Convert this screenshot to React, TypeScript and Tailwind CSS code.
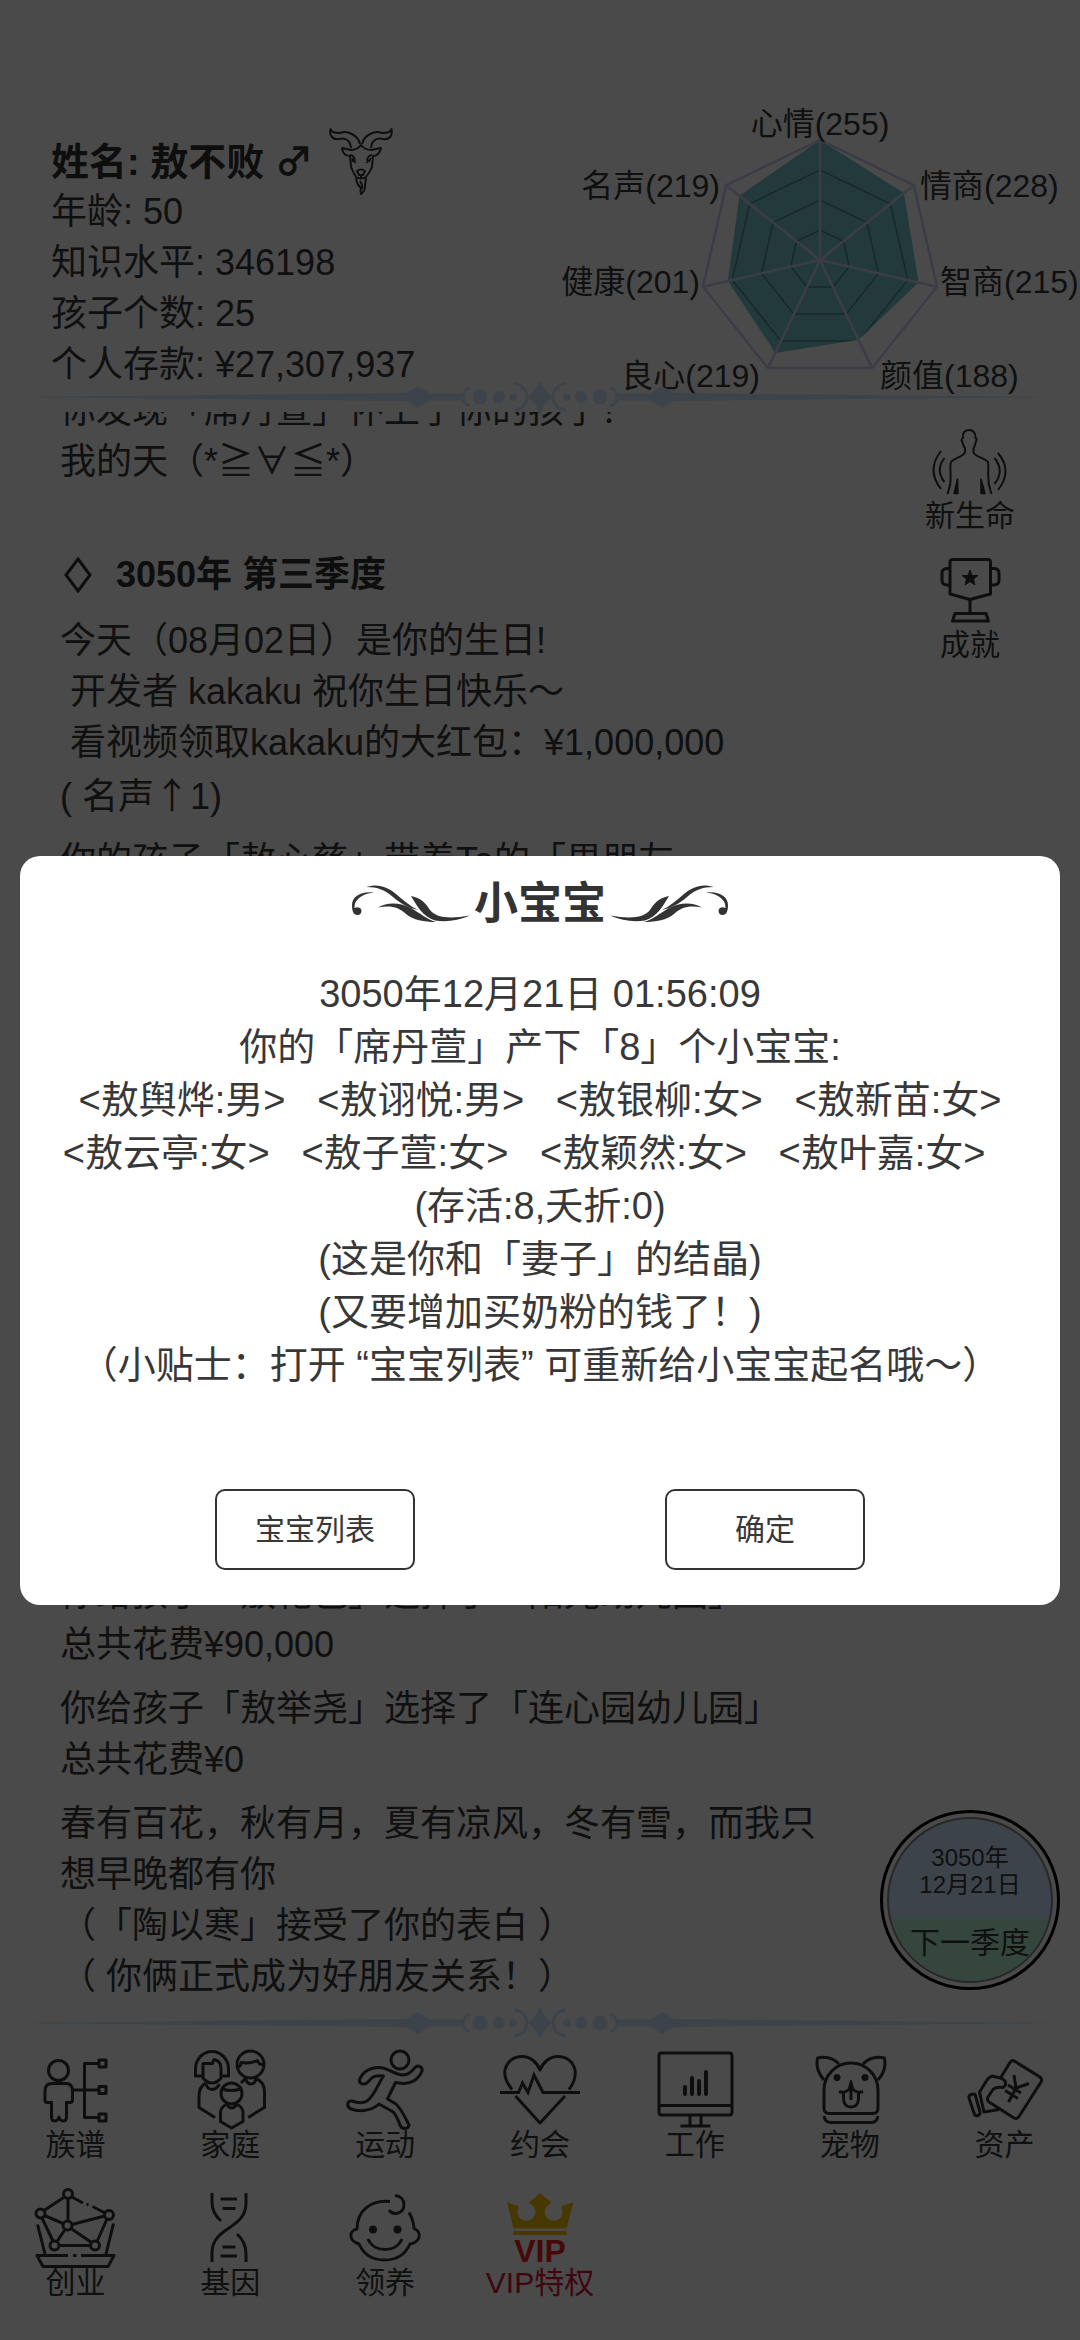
import type { ReactNode } from "react";
import clsx from "clsx";

const stats = [
  { label: "年龄", value: "50" },
  { label: "知识水平", value: "346198" },
  { label: "孩子个数", value: "25" },
  { label: "个人存款", value: "¥27,307,937" },
];

type Anchor = "start" | "middle" | "end";

const abilities: { name: string; value: number; x: number; y: number; anchor: Anchor }[] = [
  { name: "心情", value: 255, x: 280, y: 55, anchor: "middle" },
  { name: "情商", value: 228, x: 380, y: 117, anchor: "start" },
  { name: "智商", value: 215, x: 400, y: 213, anchor: "start" },
  { name: "颜值", value: 188, x: 340, y: 307, anchor: "start" },
  { name: "良心", value: 219, x: 220, y: 307, anchor: "end" },
  { name: "健康", value: 201, x: 160, y: 213, anchor: "end" },
  { name: "名声", value: 219, x: 180, y: 117, anchor: "end" },
];

const CHART = { cx: 280, cy: 180, r: 120, max: 255 };

function chartPoint(index: number, ratio: number) {
  const angle = (index * 2 * Math.PI) / abilities.length;
  const x = CHART.cx + Math.sin(angle) * CHART.r * ratio;
  const y = CHART.cy - Math.cos(angle) * CHART.r * ratio;
  return `${x.toFixed(1)},${y.toFixed(1)}`;
}

const ring = (ratio: number) => abilities.map((_, i) => chartPoint(i, ratio)).join(" ");

function AbilityChart() {
  const area = abilities.map((a, i) => chartPoint(i, a.value / CHART.max)).join(" ");
  return (
    <svg viewBox="0 0 540 310" className="w-full overflow-visible" role="img" aria-label="能力">
      <clipPath id="ability-area">
        <polygon points={area} />
      </clipPath>
      <polygon points={area} fill="#75c8cf" />
      <g clipPath="url(#ability-area)" fill="none" stroke="#4f8a92" strokeWidth="1.5">
        {[0.25, 0.5, 0.75].map((ratio) => (
          <polygon key={ratio} points={ring(ratio)} />
        ))}
      </g>
      <g fill="none" stroke="#cfcff5" strokeWidth="2.5">
        <polygon points={ring(1)} />
        {abilities.map((a, i) => {
          const [x, y] = chartPoint(i, 1).split(",");
          return <line key={a.name} x1={CHART.cx} y1={CHART.cy} x2={x} y2={y} />;
        })}
      </g>
      {abilities.map((a) => (
        <text key={a.name} x={a.x} y={a.y} textAnchor={a.anchor} className="fill-[#383838] text-[32px]">
          {`${a.name}(${a.value})`}
        </text>
      ))}
    </svg>
  );
}

function DividerHalf() {
  return (
    <>
      <path d="M10 15 L406 11 L418 4 L430 11.500 H462 V18.500 H430 L418 26 L406 19Z" />
      <path d="M470 6 A10 9.500 0 0 0 470 24" fill="none" stroke="#d0e8ff" strokeWidth="3" />
      <circle cx="480" cy="15" r="7.500" />
      <circle cx="499" cy="15" r="6" />
      <circle cx="513" cy="15" r="4" />
      <path d="M514 2 A13 13 0 0 1 514 28" fill="none" stroke="#d0e8ff" strokeWidth="3" />
    </>
  );
}

function Divider({ className }: { className?: string }) {
  return (
    <svg viewBox="0 0 1080 30" className={clsx("w-full shrink-0", className)} fill="#d0e8ff" aria-hidden="true">
      <DividerHalf />
      <g transform="matrix(-1 0 0 1 1080 0)">
        <DividerHalf />
      </g>
      <path d="M540 -2 Q544 9 552 15 Q544 21 540 32 Q536 21 528 15 Q536 9 540 -2Z" />
    </svg>
  );
}

function Icon({ children, viewBox = "0 0 80 80", className }: { children: ReactNode; viewBox?: string; className?: string }) {
  return (
    <svg
      viewBox={viewBox}
      className={clsx("overflow-visible", className ?? "size-20")}
      fill="none"
      stroke="#333"
      strokeWidth="3"
      strokeLinejoin="round"
      aria-hidden="true"
    >
      {children}
    </svg>
  );
}

function GoatIcon() {
  return (
    <Icon viewBox="0 0 64 66" className="h-[66px] w-16">
      <g strokeWidth="2">
        <path d="M31 16 C29 7 18 2 11 5 C6 5 2 4 1.500 1 C0 8 4 12 10 11 C16 9 21 12 22 20" />
        <path d="M33 16 C35 7 46 2 53 5 C58 5 62 4 62.500 1 C64 8 60 12 54 11 C48 9 43 12 42 20" />
        <path d="M32 17 Q28 22 22 22 L13 20 Q14 28 21 28 L22 39 Q24 44 27 49 Q32 52 37 49 Q41 44 43 39 L44 28 Q50 28 52 20 L42 22 Q36 22 32 17Z" />
        <path d="M21 27 Q25 27 26 33 M43 27 Q39 27 38 33 M28 43 Q32 40 36 43 L34 47 H30Z M32 47 V50" />
        <path d="M27 50 Q28 57 32 60 Q31 63 32 66 Q37 62 36 57 L37 50 M31 53 Q34 57 33 61" />
      </g>
      <path d="M23 30 L27 35 L23 33Z M42 30 L37 35 L41 33Z" fill="#333" strokeWidth="1" />
    </Icon>
  );
}

function NewLifeIcon() {
  return (
    <Icon viewBox="0 0 80 66" className="h-[66px] w-20">
      <g strokeWidth="2">
        <path d="M17.500 65 C19 59 21 56 20.500 50 C21 44 19.500 38 21 33 C25 28 34 28 35 23 V19 C33 17 33 14 31.500 11 Q32 9 33 9 C32 4 35 1 39 1 C43 1 46 4 45.500 9 Q47 9 46.500 11 C45 14 45.500 17 43.500 19 V23 C44 28 54 28 58 33 C59 38 57.500 44 58.500 50 C58 56 60 59 61.500 65" />
        <path d="M11 22 Q-4 41 11 60 M14.500 29 Q5 41 14.500 53 M64.500 29 Q75 42 64.500 55 M68 24 Q83 42 68 61" />
      </g>
      <path d="M24 64.500 L27.500 50 L28 64.500Z M51 64.500 L51 50 L55 64.500Z" fill="#333" strokeWidth="1.500" />
    </Icon>
  );
}

function TrophyIcon() {
  return (
    <Icon viewBox="0 0 80 66" className="h-[66px] w-20">
      <path d="M23 1.500 H58 Q60.500 1.500 60.500 4 V36 L40 41.500 L20 36 V4 Q20 1.500 23 1.500Z" />
      <path d="M20 10.500 H17 Q12 11 12 15 V22 Q12 27 17 27 H20 M61 10.500 H64 Q69 11 69 15 V22 Q69 27 64 27 H61 M40 42 V55 M25 55.500 H56 L58.500 63 H22.500Z" />
      <path
        d="M40 12 L42 17.500 H48 L43.500 21 L45 27 L40 23.500 L35 27 L36.500 21 L32 17.500 H38Z"
        fill="#333"
        strokeWidth="1"
      />
    </Icon>
  );
}

function FamilyTreeIcon() {
  return (
    <Icon>
      <circle cx="23.500" cy="20.500" r="10" />
      <path d="M15 52.500 H12 Q10 52.500 10 50 V41 Q10 33.500 17 33.500 H31 Q37.500 33.500 37.500 41 V50 Q37.500 52.500 35 52.500 H32" />
      <path d="M16.500 51 V67 Q16.500 71 20 71 Q23 71 24 67 Q25 71 28 71 Q31.500 71 31.500 67 V51" />
      <path d="M38 40 H64 M64 13.500 H49.500 V67.500 H64 M64 10 h7 v7 h-7z M64 36.500 h7 v7 h-7z M64 64 h7 v7 h-7z" />
    </Icon>
  );
}

function FamilyIcon() {
  return (
    <Icon>
      <path d="M12.500 26 H5.500 V19 A16.500 17.500 0 0 1 38.500 19 V26 H32" />
      <path d="M13 28 V13.500 H22.500 L24 9.500 Q31 11 31 18 V28 Q27 33 22 33 Q17 33 13 28Z" />
      <path d="M15.500 33 Q9 37 9 46 V57.500 L25 67.500 M15.500 33 Q17 39 22 39.500 Q27 39 29.500 34" />
      <circle cx="60.500" cy="14.500" r="13.500" />
      <path d="M47 17 Q51 17 51 12.500 Q60 14 67.500 10.500 Q68.500 15 74 14.500" />
      <path d="M51 33 L55.500 28.500 Q57 34 61 34 Q65 34 66 28.500 Q74.500 32 74.500 42 V57.500 L58 67.500" />
      <circle cx="41.500" cy="43.500" r="10.500" />
      <path d="M32 39 Q41.500 42 51 39 M37 54 Q30.500 57 30.500 63 V71.500 L41.500 78 L53 71.500 V63 Q53 57 46.500 54 Q45 58 41.500 58 Q38 58 37 54Z" />
    </Icon>
  );
}

function SportIcon() {
  return (
    <Icon>
      <circle cx="55" cy="10" r="9" />
      <path d="M14.500 30 C17 22 25 17.500 34 17.500 C44 17.500 48 25 58.500 25 C64 25 67 21 70 17.500 C73 14.500 78 17 77 21 C74 29 66 34 58 33.500 L50.500 32.500 L42.500 49 L51 54 C57 60 60 67 64 75 C63 80 57 79 55.500 76 C53 71 52 65 47.500 61.500 L34 54 C27 61 14 62 6 59 C1 57 2 50 7 51 C13 53 18 53.500 22 51 C30 45 33 34 38.500 26 C30 25 27 27 23.500 31.500 C20 36 14 34 14.500 30Z" />
    </Icon>
  );
}

function DateIcon() {
  return (
    <Icon>
      <path d="M12 39.500 C6 32 4 26 5 20 C7 11 14 6.500 22 6.500 C30 6.500 37 12 40 20 C43 12 50 6.500 58 6.500 C66 6.500 73 11 75 20 C76 26 74 33 69 39.500" />
      <path d="M15.500 46 L40 73 L65 46" />
      <path d="M0 42.500 H18.500 L22.500 33 L28 42.500 L34 25 L43 42.500 H80" strokeLinejoin="miter" />
    </Icon>
  );
}

function WorkIcon() {
  return (
    <Icon>
      <path d="M6 3 H74.500 Q77 3 77 5.500 V62 Q77 65 74.500 65 H6 Q4 65 4 62 V5.500 Q4 3 6 3Z M4 55.500 H77 M35 66 V75 M46 66 V75 M25.500 76 H55.500" />
      <path d="M30 37 V44 M37 28 V44 M44 31 V44 M51 22 V44" strokeWidth="4" strokeLinecap="round" />
    </Icon>
  );
}

function PetIcon() {
  return (
    <Icon>
      <path d="M14 58 V40 A27 27 0 0 1 68 40 V58 Q68 63.500 63 63.500 H19 Q14 63.500 14 58Z" />
      <path d="M29 14 Q20 5 7.500 8 Q5 20 14 30 M53 14 Q62 5 74.500 8 Q77 20 68 30 M14 66 Q15 72.500 21 72.500 H61 Q67 72.500 68 66" />
      <path d="M29 41.500 Q36 44 41 37 Q46 44 53 41.500 M33.500 43 V49 Q34 57 41 57 Q48 57 48.500 49 V43 M41 41 V50" />
      <path d="M41 31 L43.500 40 H38.500Z" fill="#333" strokeWidth="2" />
      <circle cx="27" cy="27.500" r="3.500" fill="#333" stroke="none" />
      <circle cx="55" cy="27.500" r="3.500" fill="#333" stroke="none" />
    </Icon>
  );
}

function AssetIcon() {
  return (
    <Icon>
      <path d="M35.500 28 L45 12.500 Q47 9.500 50 11.500 L75 27 Q77.500 29 76 32 L54 66.500 Q52 69.500 49 68 L24 52 Q21.500 50 23 47 L28 39.500 Q31 36.500 38 37.500 Q42 35 40 31 Q38 28.500 35 28 L27 26 L23 28.500 L14.500 42 L19 62 L34 59.500" />
      <path d="M5 45 L8 44 Q10 43.500 10.500 46 L15 62 Q15.500 64.500 13 65.500 Q10 66.500 9 63 L4 48 Q3.500 46 5 45Z" />
      <path d="M49 25 L51 38 L64 33.500 M51 38 L43.500 52 M43 35 L56 43 M40 40.500 L53 48.500" />
    </Icon>
  );
}

function StartupIcon() {
  const nodes = [
    [33, 6],
    [5.5, 25.5],
    [74, 27],
    [32.5, 37.5],
    [19.5, 57.5],
    [60, 57.5],
  ];
  return (
    <Icon>
      {nodes.map(([cx, cy]) => (
        <circle key={`${cx}-${cy}`} cx={cx} cy={cy} r="4.500" />
      ))}
      <path d="M29.500 9 L9 22.500 M33 11 V33 M37 9 L48 15 M51.500 16.500 h2 M57.500 18.500 L70 25 M9.500 27.500 L28 35.500 M37 36.500 L69.500 28 M7 30 L18 53 M72 31 L62 53.500 M30 41.500 L22 53.500 M36 40.500 L56.500 54.500 M24 57.500 H55.500" />
      <path d="M2.500 36.500 L10 66 M78.500 35.500 L71 66 M33 67.500 H2 L8 78.500 H73 L79 67.500 H46 M38 67.500 h3.500" />
    </Icon>
  );
}

function GeneIcon() {
  return (
    <Icon>
      <path d="M22 5 V14 Q22 25 31 33 M56 5 V15 C56 42 22 38 22 65 V74 M47 46 Q56 54 56 66 V74 M30.500 11 H47 M32.500 20.500 H45.500 M32.500 59 H45.500 M30.500 68 H47" />
    </Icon>
  );
}

function AdoptIcon() {
  return (
    <Icon>
      <path d="M45 13.500 C26 12 12 22 12 41 C5 42 2 52 14 56 C19 67 28 72 39.500 72 C51 72 60 67 65 56 C76 54 77 44 69 40.500 Q68.500 32 64 24.500" />
      <path d="M50 7.500 C56 8 59 12 59 16.500 C59 26 48 28 44 22 M23 51 C29 65 51 65 57 51" />
      <ellipse cx="28" cy="41.500" rx="4" ry="4" fill="#333" stroke="none" />
      <ellipse cx="52.500" cy="41.500" rx="4" ry="4" fill="#333" stroke="none" />
    </Icon>
  );
}

function VipIcon() {
  return (
    <Icon>
      <g fill="#f5bc00" stroke="none">
        <path d="M7 14 L19 18.500 A9 9 0 1 0 34 19 L29 14.500 L40 5 L51.500 14.500 L46 19 A9 9 0 1 0 61 18.500 L73.500 14 L66.500 40.500 H13.500Z" />
        <path d="M13.500 43 H66.500 V47 H13.500Z" />
      </g>
      <text x="40" y="74" textAnchor="middle" stroke="none" className="fill-[#f01c1c] text-[32px] font-bold">
        VIP
      </text>
    </Icon>
  );
}

const menu = [
  { label: "族谱", icon: <FamilyTreeIcon /> },
  { label: "家庭", icon: <FamilyIcon /> },
  { label: "运动", icon: <SportIcon /> },
  { label: "约会", icon: <DateIcon /> },
  { label: "工作", icon: <WorkIcon /> },
  { label: "宠物", icon: <PetIcon /> },
  { label: "资产", icon: <AssetIcon /> },
  { label: "创业", icon: <StartupIcon /> },
  { label: "基因", icon: <GeneIcon /> },
  { label: "领养", icon: <AdoptIcon /> },
  { label: "VIP特权", icon: <VipIcon />, vip: true },
];

// full-width symbols (arrows, gender signs) come from the CJK face
function Symbol({ children }: { children: string }) {
  return <span className="font-['Noto_Sans_CJK_SC',sans-serif]">{children}</span>;
}

function LogEntry({ lines }: { lines: string[] }) {
  return (
    <p className="whitespace-pre-wrap">
      {lines.map((line) => (
        <span key={line} className="block h-auto">
          {line.split(/(↑)/).map((part) => (part === "↑" ? <Symbol key={part}>{part}</Symbol> : part))}
        </span>
      ))}
    </p>
  );
}

function SideButton({ label, icon }: { label: string; icon: ReactNode }) {
  return (
    <button type="button" className="flex flex-col items-center gap-[6px] text-[30px] leading-[30px]">
      {icon}
      {label}
    </button>
  );
}

function Flourish({ className }: { className?: string }) {
  return (
    <svg viewBox="0 0 120 40" className={clsx("h-10 w-[120px]", className)} fill="#333" aria-hidden="true">
      <path d="M24 8.500 C10 10 4 17 4.500 24 Q10 22 11.500 26 Q11.500 31 7.500 31 C3 31 2 26 2 21 C2 13 10 7 24 8.500Z" />
      <path d="M16 3 C28 -1 38 3 46 10 C53 16 60 22 68 26 C58 24 50 19 43 13 C35 6 28 3 16 3Z" />
      <path d="M61 12 C72 14 76 20 80 26 C86 34 100 35 120 31.500 C108 37 96 38 85 36.500 C73 33 67 22 61 12Z" />
      <path d="M28 23.500 C38 17 52 19 61 24 C70 29 76 35 86 38 C74 38 63 36 56 30 C49 23 40 21 28 23.500Z" />
    </svg>
  );
}

const babies = [
  ["<敖舆烨:男>", "<敖诩悦:男>", "<敖银柳:女>", "<敖新苗:女>"],
  ["<敖云亭:女>", "<敖子萱:女>", "<敖颖然:女>", "<敖叶嘉:女>"],
];

const GAP = "\u00a0\u00a0\u00a0";

function BirthDialog() {
  return (
    <div className="fixed inset-0 flex items-center justify-center bg-black/71 px-5 pt-[120px]">
      <section
        role="dialog"
        aria-modal="true"
        aria-labelledby="birth-title"
        className="w-full rounded-[20px] bg-white pt-[18px] pb-[35px] text-center text-[#383838]"
      >
        <div className="flex items-center justify-center gap-1">
          <Flourish />
          <h2 id="birth-title" className="text-[44px] leading-[60px] font-bold text-[#333]">
            小宝宝
          </h2>
          <Flourish className="-scale-x-100" />
        </div>
        <div className="mt-[34px] text-[38px] leading-[53px]">
          <p>3050年12月21日 01:56:09</p>
          <p>你的「席丹萱」产下「8」个小宝宝:</p>
          <p>{babies[0].join(GAP)}</p>
          <p>{babies[1].join(GAP) + GAP}</p>
          <p>(存活:8,夭折:0)</p>
          <p>(这是你和「妻子」的结晶)</p>
          <p>(又要增加买奶粉的钱了！)</p>
          <p>（小贴士：打开 “宝宝列表” 可重新给小宝宝起名哦～）</p>
        </div>
        <div className="mt-[97px] grid grid-cols-2 justify-items-center px-[70px] text-[30px]">
          <button type="button" className="h-[81px] w-[200px] rounded-[10px] border-2 border-[#333]">
            宝宝列表
          </button>
          <button type="button" className="h-[81px] w-[200px] rounded-[10px] border-2 border-[#333]">
            确定
          </button>
        </div>
      </section>
    </div>
  );
}

export default function App() {
  return (
    <div className="font-['Liberation_Sans','Noto_Sans_CJK_SC',sans-serif] [text-spacing-trim:space-all]">
      <main className="flex h-screen flex-col bg-white text-[36px] leading-[51px] text-[#383838]">
        <header className="grid grid-cols-2 pt-20">
          <div className="pt-[55px] pl-[51px]">
            <div className="flex h-[51px] items-center gap-4">
              <h1 className="text-[38px] font-bold text-[#333]">
                姓名: 敖不败 <Symbol>♂</Symbol>
              </h1>
              <GoatIcon />
            </div>
            {stats.map((s) => (
              <p key={s.label}>
                {s.label}: {s.value}
              </p>
            ))}
          </div>
          <AbilityChart />
        </header>
        <Divider className="-mt-2 overflow-visible" />
        <div className="flex min-h-0 flex-1">
          <section className="flex flex-1 flex-col justify-between overflow-hidden pr-4 pb-[6px] pl-[60px]">
            <div className="-mt-[27px]">
              <LogEntry lines={["你发现「席丹萱」怀上了你的孩子！", "我的天（*≧∀≦*）"]} />
              <h2 className="mt-[62px] mb-[15px] flex items-center gap-5 font-bold text-[#333]">
                <svg viewBox="0 0 36 40" className="h-10 w-9" fill="none" stroke="#333" strokeWidth="3" aria-hidden="true">
                  <path d="M18 4 L30 20 L18 36 L6 20Z" />
                </svg>
                3050年 第三季度
              </h2>
              <div className="flex flex-col gap-[13px]">
                <LogEntry
                  lines={[
                    "今天（08月02日）是你的生日!",
                    "\u00a0开发者 kakaku 祝你生日快乐～",
                    "\u00a0看视频领取kakaku的大红包：¥1,000,000",
                    "( 名声↑1)",
                  ]}
                />
                <LogEntry lines={["你的孩子「敖心慈」带着Ta的「男朋友"]} />
              </div>
            </div>
            <div className="flex flex-col gap-[13px]">
              <LogEntry lines={["你给孩子「敖花色」选择了「阳光幼儿园」", "总共花费¥90,000"]} />
              <LogEntry lines={["你给孩子「敖举尧」选择了「连心园幼儿园」", "总共花费¥0"]} />
              <LogEntry
                lines={[
                  "春有百花，秋有月，夏有凉风，冬有雪，而我只想早晚都有你",
                  "（「陶以寒」接受了你的表白 ）",
                  "（ 你俩正式成为好朋友关系！）",
                ]}
              />
            </div>
          </section>
          <aside className="flex w-[220px] flex-col items-center justify-between pt-[17px] pb-[18px]">
            <div className="flex flex-col gap-[27px]">
              <SideButton label="新生命" icon={<NewLifeIcon />} />
              <SideButton label="成就" icon={<TrophyIcon />} />
            </div>
            <button type="button" className="size-[180px] rounded-full border-[3px] border-black p-1">
              <span className="flex size-full flex-col overflow-hidden rounded-full border-2 border-[#888] bg-[#d0e8ff]">
                <span className="flex flex-1 flex-col justify-center pt-1 text-2xl leading-[27px]">
                  <span>3050年</span>
                  <span>12月21日</span>
                </span>
                <span className="h-[62px] bg-[#b7f1d9] pt-1 text-[30px] leading-[40px]">下一季度</span>
              </span>
            </button>
          </aside>
        </div>
        <Divider />
        <nav className="-mx-[2px] grid grid-cols-7 gap-y-7 pt-3 pb-[42px]">
          {menu.map((item) => (
            <button
              key={item.label}
              type="button"
              className={clsx(
                "flex flex-col items-center text-[30px] leading-[30px]",
                item.vip && "text-[#dc143c]",
              )}
            >
              {item.icon}
              {item.label}
            </button>
          ))}
        </nav>
      </main>
      <BirthDialog />
    </div>
  );
}
